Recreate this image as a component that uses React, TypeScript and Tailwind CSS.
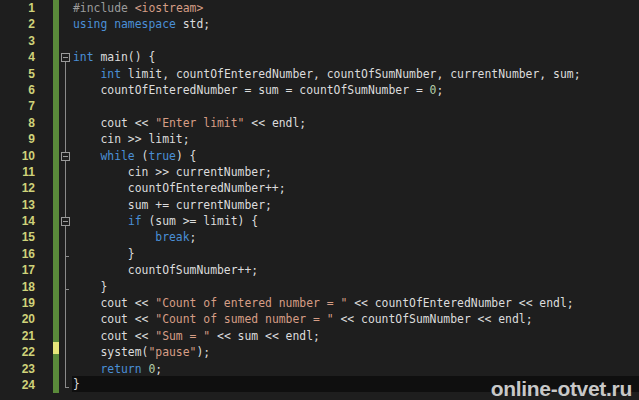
import React from 'react';

type Tok = [string, string?];

const C = {
    kw: 'text-[#4a8fd6]',
    pp: 'text-[#9b9b9b]',
    str: 'text-[#d69d85]',
    num: 'text-[#b5cea8]',
};

const lines: Tok[][] = [
    [['#include ', C.pp], ['<iostream>', C.str]],
    [['using namespace', C.kw], [' std;']],
    [],
    [['int', C.kw], [' main() {']],
    [['    '], ['int', C.kw], [' limit, countOfEnteredNumber, countOfSumNumber, currentNumber, sum;']],
    [['    countOfEnteredNumber = sum = countOfSumNumber = '], ['0', C.num], [';']],
    [],
    [['    cout << '], ['"Enter limit"', C.str], [' << endl;']],
    [['    cin >> limit;']],
    [['    '], ['while', C.kw], [' ('], ['true', C.kw], [') {']],
    [['        cin >> currentNumber;']],
    [['        countOfEnteredNumber++;']],
    [['        sum += currentNumber;']],
    [['        '], ['if', C.kw], [' (sum >= limit) {']],
    [['            '], ['break', C.kw], [';']],
    [['        }']],
    [['        countOfSumNumber++;']],
    [['    }']],
    [['    cout << '], ['"Count of entered number = "', C.str], [' << countOfEnteredNumber << endl;']],
    [['    cout << '], ['"Count of sumed number = "', C.str], [' << countOfSumNumber << endl;']],
    [['    cout << '], ['"Sum = "', C.str], [' << sum << endl;']],
    [['    system('], ['"pause"', C.str], [');']],
    [['    '], ['return', C.kw], [' '], ['0', C.num], [';']],
    [['}']],
];

// fold markers: line index -> 'box' | 'end'
const folds: Record<number, 'box' | 'end'> = { 3: 'box', 9: 'box', 13: 'box', 15: 'end', 17: 'end', 23: 'end' };

export default function App() {
    return (
        <div className="w-[639px] h-[400px] bg-[#1e1e1e] overflow-hidden relative">
            <div className="flex">
                {/* line numbers */}
                <div className="w-[35px] flex flex-col items-end font-['Liberation_Sans',sans-serif] font-bold text-[12px] text-[#cfd27a]">
                    {lines.map((_, i) => (
                        <div key={i} className="h-[16.4px] leading-[16.4px]">{i + 1}</div>
                    ))}
                </div>
                <div className="w-[18px]" />
                {/* change bar */}
                <div className="w-[6px] h-[393px] bg-[#5a8a3a] flex flex-col">
                    <div className="h-[342px]" />
                    <div className="h-[12px] bg-[#e6e67a]" />
                </div>
                {/* fold gutter */}
                <div className="w-[13px] flex flex-col relative">
                    {lines.map((_, i) => (
                        <div key={i} className="h-[16.4px] relative">
                            {i > 3 && i <= 23 && (
                                <div className={`absolute left-[6px] w-px bg-[#8a8a8a] ${i === 23 ? 'top-0 h-[10px]' : 'top-0 bottom-0'}`} />
                            )}
                            {i === 3 && <div className="absolute left-[6px] top-[12px] bottom-0 w-px bg-[#8a8a8a]" />}
                            {folds[i] === 'box' && (
                                <div className="absolute left-[2px] top-[4px] w-[9px] h-[9px] border border-[#9a9a9a] bg-[#1e1e1e] flex items-center justify-center">
                                    <div className="w-[5px] h-px bg-[#9a9a9a]" />
                                </div>
                            )}
                            {folds[i] === 'end' && <div className="absolute left-[6px] top-[10px] w-[4px] h-px bg-[#8a8a8a]" />}
                        </div>
                    ))}
                </div>
                {/* code */}
                <div className="flex-1 font-['DejaVu_Sans_Mono',monospace] text-[11.4px] text-[#dcdcdc]">
                    {lines.map((toks, i) => (
                        <div
                            key={i}
                            className={`h-[16.4px] leading-[16.4px] whitespace-pre pl-[1px] ${i === 23 ? 'bg-[#0f0f0f] mt-[-1px] h-[15px] leading-[15px]' : ''}`}
                        >
                            {toks.map(([t, cls], j) => (
                                <span key={j} className={cls}>{t}</span>
                            ))}
                        </div>
                    ))}
                </div>
            </div>
            <div className="absolute right-[7px] top-[373px] font-['Liberation_Sans',sans-serif] font-bold text-[21px] text-[#c8c8c8] tracking-[-0.3px]">
                online-otvet.ru
            </div>
        </div>
    );
}
